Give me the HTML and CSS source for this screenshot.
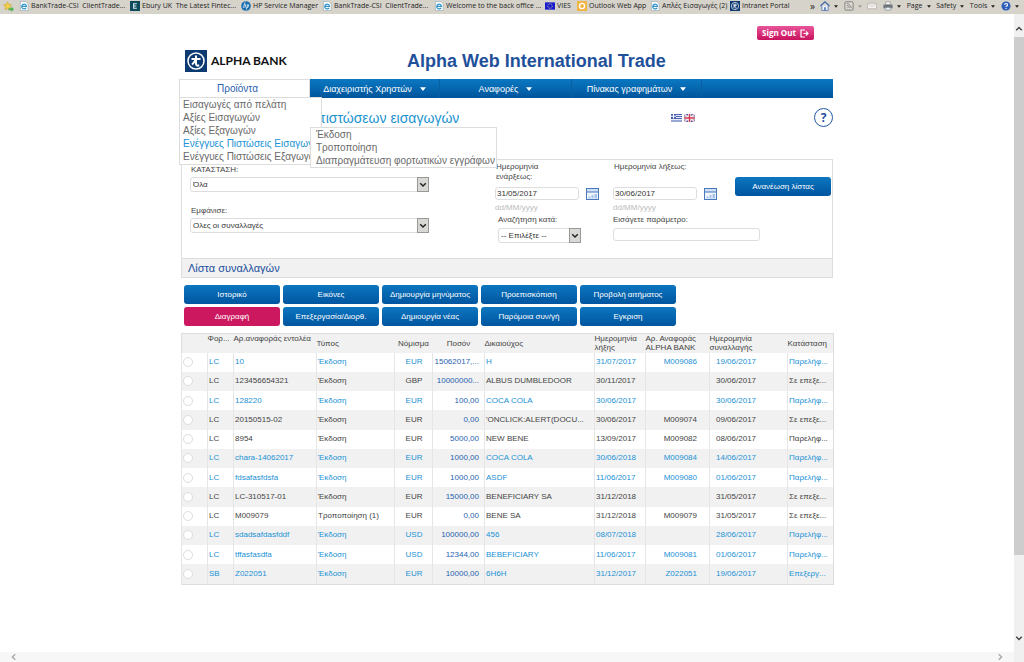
FILE: index.html
```html
<!DOCTYPE html>
<html lang="el">
<head>
<meta charset="utf-8">
<title>Alpha Web International Trade</title>
<link rel="stylesheet" href="styles.css">
</head>
<body>
<svg class="defs" aria-hidden="true">
  <symbol id="ie" viewBox="0 0 10 11"><path d="M1 .5h6l2.500 2.500v7.500H1z" fill="#fff" stroke="#9aa7b0" stroke-width=".7"/><path d="M7.300 7.500a2.600 2.600 0 1 1 .4-1.500H2.600" fill="none" stroke="#2f94c8" stroke-width="1.300"/></symbol>
  <symbol id="chev" viewBox="0 0 10 10"><path d="M1.500 3.500 5 7l3.500-3.500" fill="none" stroke="currentColor" stroke-width="1.800"/></symbol>
  <symbol id="tri" viewBox="0 0 8 5"><path d="M0 0h8L4 5z" fill="currentColor"/></symbol>
  <symbol id="cal" viewBox="0 0 13 12"><rect x=".5" y=".5" width="12" height="11" fill="#eef4fc" stroke="#4a78bd"/><path d="M1 1h11v3H1z" fill="#cfe0f5"/><path d="M0 4h13" stroke="#4a78bd"/><path d="M2.500 8.500h2v2h-2zM5.500 7h2v3.500h-2zM8.500 6h2.500v4.500H8.500z" fill="#a9c4e8"/></symbol>
  <symbol id="alpha" viewBox="0 0 22 22"><path d="M0 0h22v22H0z" fill="#0d3a73"/><circle cx="11" cy="11" r="8" fill="none" stroke="#fff" stroke-width="1.500"/><path d="M11 5.500v8c0 2 1.200 2.600 3.200 1.800M6.500 9h9M11 9c-1.500 3-2.500 4.500-4 5.500" fill="none" stroke="#fff" stroke-width="2"/></symbol>
</svg>

<header class="favbar">
  <svg class="star" viewBox="0 0 12 12"><path d="M5 1l1.400 2.900 3.100.4-2.300 2.200.6 3.100L5 8.100 2.200 9.600l.6-3.100L.5 4.300l3.100-.4z" fill="#f5d04a" stroke="#c99a22" stroke-width=".6"/><path d="M6 8h3V6l3 3-3 3v-2H6z" fill="#4db34a"/></svg>
  <nav class="favs" aria-label="Favorites">
    <a href="#"><svg><use href="#ie"/></svg>BankTrade-CSI&nbsp; ClientTrade...</a>
    <a href="#"><svg viewBox="0 0 11 11"><path d="M0 0h11v11H0z" fill="#0d4a5c"/><path d="M7.500 3H4v5h3.500M4 5.500h3" fill="none" stroke="#d8eef0" stroke-width="1.200"/></svg>Ebury UK&nbsp; The Latest Fintec...</a>
    <a href="#"><svg viewBox="0 0 11 11"><circle cx="5.500" cy="5.500" r="5.300" fill="#1c6fae"/><path d="M4.500 1.500 2.500 7.500M3.800 4.200h1.400L4.200 7.500M7.200 4 5.800 9.500M7 4.200h1.500L7.500 7.200H6.400" fill="none" stroke="#fff" stroke-width=".8"/></svg>HP Service Manager</a>
    <a href="#"><svg><use href="#ie"/></svg>BankTrade-CSI&nbsp; ClientTrade...</a>
    <a href="#"><svg><use href="#ie"/></svg>Welcome to the back office ...</a>
    <a href="#"><svg viewBox="0 0 11 11"><path d="M0 1.500h11v8H0z" fill="#1b1bd0"/><circle cx="5.500" cy="5.500" r="2.500" fill="none" stroke="#dfe36a" stroke-dasharray="1 1"/></svg>VIES</a>
    <a href="#"><svg viewBox="0 0 11 11"><path d="M0 0h11v11H0z" fill="#f2b544"/><circle cx="5.500" cy="5.500" r="2.800" fill="none" stroke="#fff" stroke-width="1.400"/></svg>Outlook Web App</a>
    <a href="#"><svg><use href="#ie"/></svg>Απλές Εισαγωγές (2)</a>
    <a href="#"><svg><use href="#alpha"/></svg>Intranet Portal</a>
  </nav>
  <span class="more">»</span>
  <div class="tools">
    <button aria-label="Home"><svg class="ico" viewBox="0 0 11 11"><path d="M2 5v5.500h7V5" fill="#e9eef8" stroke="#5f7fb5"/><path d="M.5 5.500 5.500 1l5 4.500" fill="none" stroke="#3e68a8" stroke-width="1.300"/><path d="M4.500 7h2v3.500h-2z" fill="#5f7fb5"/></svg><svg class="dd"><use href="#tri"/></svg></button>
    <button aria-label="Feeds"><svg class="ico" viewBox="0 0 11 11"><rect x="1" y="1" width="9" height="9" rx="1" fill="#e4e2dc" stroke="#77756f"/><path d="M3 5a3 3 0 0 1 3 3M3 3a5 5 0 0 1 5 5M3 7.500h1" fill="none" stroke="#77756f"/></svg><svg class="dd faint"><use href="#tri"/></svg></button>
    <button aria-label="Mail"><svg class="ico" viewBox="0 0 11 11"><path d="M.5 2.500h10v6H.5z" fill="#f3f2ee" stroke="#bdbab2"/><path d="M1 3l4.500 3L10 3" fill="none" stroke="#d0cdc5"/></svg></button>
    <button aria-label="Print"><svg class="ico" viewBox="0 0 11 11"><path d="M3 1h5v3H3z" fill="#fff" stroke="#777" stroke-width=".6"/><path d="M.5 4h10v4H.500z" fill="#6d7580"/><path d="M2.500 7h6v3h-6z" fill="#e8eef6" stroke="#777" stroke-width=".6"/></svg><svg class="dd"><use href="#tri"/></svg></button>
    <button>Page<svg class="dd"><use href="#tri"/></svg></button>
    <button>Safety<svg class="dd"><use href="#tri"/></svg></button>
    <button>Tools<svg class="dd"><use href="#tri"/></svg></button>
    <button aria-label="Help"><svg class="ico" viewBox="0 0 11 11"><circle cx="5.500" cy="5.500" r="5" fill="#2f5fb8"/><path d="M4 4.300c0-2 3.200-2 3.200 0 0 1.200-1.600 1.200-1.600 2.400M5.600 7.700v1.200" fill="none" stroke="#fff" stroke-width="1.200"/></svg><svg class="dd"><use href="#tri"/></svg></button>
  </div>
</header>

<div class="viewport">
  <main class="page">
    <div class="account">
      <button class="signout">Sign Out<svg viewBox="0 0 9 9"><path d="M5 1H1v7h4M3.500 4.500H8M6 2.500l2 2-2 2" fill="none" stroke="#fff" stroke-width="1.200"/></svg></button>
    </div>
    <div class="brand">
      <a class="logo" href="#"><svg><use href="#alpha"/></svg>ALPHA BANK</a>
      <div class="title">Alpha Web International Trade</div>
    </div>

    <nav class="menubar">
      <div class="tab open">
        <a href="#">Προϊόντα</a>
        <ul class="menu">
          <li><a href="#">Εισαγωγές από πελάτη</a></li>
          <li><a href="#">Αξίες Εισαγωγών</a></li>
          <li><a href="#">Αξίες Εξαγωγών</a></li>
          <li class="active"><a href="#">Ενέγγυες Πιστώσεις Εισαγωγών</a></li>
          <li><a href="#">Ενέγγυες Πιστώσεις Εξαγωγών</a></li>
        </ul>
        <ul class="menu submenu">
          <li><a href="#">Έκδοση</a></li>
          <li><a href="#">Τροποποίηση</a></li>
          <li><a href="#">Διαπραγμάτευση φορτωτικών εγγράφων</a></li>
        </ul>
      </div>
      <a class="tab" href="#">Διαχειριστής Χρηστών<svg><use href="#tri"/></svg></a>
      <a class="tab" href="#">Αναφορές<svg><use href="#tri"/></svg></a>
      <a class="tab" href="#">Πίνακας γραφημάτων<svg><use href="#tri"/></svg></a>
    </nav>

    <div class="heading">
      <h1>πιστώσεων εισαγωγών</h1>
      <div class="flags">
        <a href="#" aria-label="Ελληνικά"><svg viewBox="0 0 11 8"><path d="M0 0h11v8H0z" fill="#e6ebf7"/><path d="M0 .5h11M0 2.500h11M0 4.500h11M0 7h11" stroke="#4a63b5"/><path d="M0 0h5v4.500H0z" fill="#4a63b5"/><path d="M2.500 0v4.500M0 2.200h5" stroke="#fff"/></svg></a>
        <a href="#" aria-label="English"><svg viewBox="0 0 11 8"><path d="M0 0h11v8H0z" fill="#5d62a8"/><path d="M0 0l11 8M11 0 0 8" stroke="#f0d8e0" stroke-width="1.600"/><path d="M5.500 0v8M0 4h11" stroke="#fff" stroke-width="2.800"/><path d="M5.500 0v8M0 4h11" stroke="#d23a50" stroke-width="1.500"/></svg></a>
      </div>
      <button class="help">?</button>
    </div>

    <form class="filters">
      <div class="lists">
        <label for="status">ΚΑΤΑΣΤΑΣΗ:</label>
        <div class="select"><select id="status"><option>Όλα</option></select><svg><use href="#chev"/></svg></div>
        <label for="show">Εμφάνισε:</label>
        <div class="select"><select id="show"><option>Ολες οι συναλλαγές</option></select><svg><use href="#chev"/></svg></div>
      </div>
      <div class="date">
        <label for="from">Ημερομηνία<br>ενάρξεως:</label>
        <div class="pick"><input id="from" type="text" value="31/05/2017"><button type="button" aria-label="Ημερολόγιο"><svg><use href="#cal"/></svg></button></div>
        <small>dd/MM/yyyy</small>
      </div>
      <div class="date">
        <label for="to">Ημερομηνία λήξεως:</label>
        <div class="pick"><input id="to" type="text" value="30/06/2017"><button type="button" aria-label="Ημερολόγιο"><svg><use href="#cal"/></svg></button></div>
        <small>dd/MM/yyyy</small>
      </div>
      <button class="btn refresh" type="button">Ανανέωση λίστας</button>
      <div class="search">
        <label for="by">Αναζήτηση κατά:</label>
        <div class="select"><select id="by"><option>-- Επιλέξτε --</option></select><svg><use href="#chev"/></svg></div>
      </div>
      <div class="param">
        <label for="param">Εισάγετε παράμετρο:</label>
        <input id="param" type="text">
      </div>
    </form>

    <h2>Λίστα συναλλαγών</h2>
    <div class="actions">
      <button class="btn">Ιστορικό</button>
      <button class="btn">Εικόνες</button>
      <button class="btn">Δημιουργία μηνύματος</button>
      <button class="btn">Προεπισκόπιση</button>
      <button class="btn">Προβολή αιτήματος</button>
      <button class="btn danger">Διαγραφή</button>
      <button class="btn">Επεξεργασία/Διορθ.</button>
      <button class="btn">Δημιουργία νέας</button>
      <button class="btn">Παρόμοια συν/γή</button>
      <button class="btn">Εγκριση</button>
    </div>

    <table class="list">
      <colgroup><col class="c26"><col class="c26"><col class="c83"><col class="c78"><col class="c38"><col class="c52"><col class="c110"><col class="c51"><col class="c64"><col class="c78"><col class="c46"></colgroup>
      <thead><tr><th></th><th class="up">Φορ...</th><th class="up">Αρ.αναφοράς εντολέα</th><th>Τύπος</th><th class="mid">Νόμισμα</th><th class="mid">Ποσόν</th><th>Δικαιούχος</th><th>Ημερομηνία λήξης</th><th>Αρ. Αναφοράς ALPHA BANK</th><th>Ημερομηνία συναλλαγής</th><th>Κατάσταση</th></tr></thead>
      <tbody>
        <tr class="new"><td><input type="radio" name="r" aria-label="10"></td><td>LC</td><td>10</td><td>Έκδοση</td><td>EUR</td><td>15062017,...</td><td>H</td><td>31/07/2017</td><td>M009086</td><td>19/06/2017</td><td>Παρελήφ...</td></tr>
        <tr><td><input type="radio" name="r" aria-label="123456654321"></td><td>LC</td><td>123456654321</td><td>Έκδοση</td><td>GBP</td><td>10000000...</td><td>ALBUS DUMBLEDOOR</td><td>30/11/2017</td><td></td><td>30/06/2017</td><td>Σε επεξε...</td></tr>
        <tr class="new"><td><input type="radio" name="r" aria-label="128220"></td><td>LC</td><td>128220</td><td>Έκδοση</td><td>EUR</td><td>100,00</td><td>COCA COLA</td><td>30/06/2017</td><td></td><td>30/06/2017</td><td>Παρελήφ...</td></tr>
        <tr><td><input type="radio" name="r" aria-label="20150515-02"></td><td>LC</td><td>20150515-02</td><td>Έκδοση</td><td>EUR</td><td>0,00</td><td>'ONCLICK:ALERT(DOCU...</td><td>30/06/2017</td><td>M009074</td><td>09/06/2017</td><td>Σε επεξε...</td></tr>
        <tr><td><input type="radio" name="r" aria-label="8954"></td><td>LC</td><td>8954</td><td>Έκδοση</td><td>EUR</td><td>5000,00</td><td>NEW BENE</td><td>13/09/2017</td><td>M009082</td><td>08/06/2017</td><td>Παρελήφ...</td></tr>
        <tr class="new"><td><input type="radio" name="r" aria-label="chara-14062017"></td><td>LC</td><td>chara-14062017</td><td>Έκδοση</td><td>EUR</td><td>1000,00</td><td>COCA COLA</td><td>30/06/2018</td><td>M009084</td><td>14/06/2017</td><td>Παρελήφ...</td></tr>
        <tr class="new"><td><input type="radio" name="r" aria-label="fdsafasfdsfa"></td><td>LC</td><td>fdsafasfdsfa</td><td>Έκδοση</td><td>EUR</td><td>1000,00</td><td>ASDF</td><td>11/06/2017</td><td>M009080</td><td>01/06/2017</td><td>Παρελήφ...</td></tr>
        <tr><td><input type="radio" name="r" aria-label="LC-310517-01"></td><td>LC</td><td>LC-310517-01</td><td>Έκδοση</td><td>EUR</td><td>15000,00</td><td>BENEFICIARY SA</td><td>31/12/2018</td><td></td><td>31/05/2017</td><td>Σε επεξε...</td></tr>
        <tr><td><input type="radio" name="r" aria-label="M009079"></td><td>LC</td><td>M009079</td><td>Τροποποίηση (1)</td><td>EUR</td><td>0,00</td><td>BENE SA</td><td>31/12/2018</td><td>M009079</td><td>31/05/2017</td><td>Σε επεξε...</td></tr>
        <tr class="new"><td><input type="radio" name="r" aria-label="sdadsafdasfddf"></td><td>LC</td><td>sdadsafdasfddf</td><td>Έκδοση</td><td>USD</td><td>100000,00</td><td>456</td><td>08/07/2018</td><td></td><td>28/06/2017</td><td>Παρελήφ...</td></tr>
        <tr class="new"><td><input type="radio" name="r" aria-label="tffasfasdfa"></td><td>LC</td><td>tffasfasdfa</td><td>Έκδοση</td><td>USD</td><td>12344,00</td><td>BEBEFICIARY</td><td>11/06/2017</td><td>M009081</td><td>01/06/2017</td><td>Παρελήφ...</td></tr>
        <tr class="new"><td><input type="radio" name="r" aria-label="Z022051"></td><td>SB</td><td>Z022051</td><td>Έκδοση</td><td>EUR</td><td>10000,00</td><td>6H6H</td><td>31/12/2017</td><td>Z022051</td><td>19/06/2017</td><td>Επεξεργ...</td></tr>
      </tbody>
    </table>
  </main>
  <div class="vbar"><svg class="flip"><use href="#chev"/></svg><div class="thumb"></div><svg><use href="#chev"/></svg></div>
  <div class="hbar"><svg class="left"><use href="#chev"/></svg><svg class="right"><use href="#chev"/></svg></div>
</div>
</body>
</html>
```

FILE: styles.css
```css
* { box-sizing: border-box; }
body {
  margin: 0;
  height: 100vh;
  display: flex;
  flex-direction: column;
  overflow: hidden;
  background: #fff;
  color: #444;
  font: 8px/10px "Liberation Sans", Arial, sans-serif;
}
.defs { position: absolute; width: 0; height: 0; }
a { color: inherit; text-decoration: none; }
button, input, select { font: inherit; color: inherit; margin: 0; }
button { border: 0; padding: 0; background: none; white-space: nowrap; }
ul { list-style: none; margin: 0; padding: 0; }

/* Favorites bar */
.favbar {
  display: flex;
  align-items: center;
  height: 14px;
  flex: none;
  padding: 0 5px 2px 3px;
  background: #d6d3cb;
  color: #222;
  font: 7px/12px "Open Sans", Tahoma, sans-serif;
}
.star { width: 11px; height: 11px; margin-right: 5px; }
.favs { display: grid; grid-template-columns: 111px 111px 81px 112px 111px 32px 73px 80px 80px; }
.favs a { display: flex; align-items: center; gap: 2px; white-space: nowrap; }
.favs svg { width: 10px; height: 10px; flex: none; }
.more { font-size: 10px; line-height: 12px; }
.tools { display: flex; flex: 1; align-items: center; justify-content: space-between; padding-left: 5px; }
.tools button { display: flex; align-items: center; gap: 4px; }
.ico { width: 10px; height: 10px; }
.dd { width: 4px; height: 3px; }
.faint { opacity: .3; }

/* Scrolling area */
.viewport {
  flex: 1;
  min-height: 0;
  display: grid;
  grid-template: 1fr 10px / 1fr 10px;
}
.vbar {
  grid-area: 1 / 2 / 3 / 3;
  display: flex;
  flex-direction: column;
  align-items: center;
  padding: 11px 0 20px;
  background: #f0f0f0;
  color: #444;
}
.vbar svg, .hbar svg { width: 8px; height: 8px; flex: none; }
.thumb { width: 100%; flex: 0 0 84%; margin: 4px 0 auto; background: #cdcdcd; }
.hbar {
  grid-area: 2 / 1;
  display: flex;
  align-items: center;
  justify-content: space-between;
  padding: 0 10px;
  background: #f7f7f7;
  color: #aaa;
}
.flip { transform: rotate(180deg); }
.left { transform: rotate(90deg); }
.right { transform: rotate(-90deg); }

.page { width: 100%; max-width: 656px; margin: 0 auto; padding: 12px 2px 0 0; }

/* Masthead */
.account { display: flex; justify-content: flex-end; padding-right: 19px; }
.signout {
  display: flex;
  align-items: center;
  justify-content: center;
  gap: 4px;
  width: 57px;
  height: 14px;
  border-radius: 2px;
  background: linear-gradient(#e8559a, #c9125c);
  color: #fff;
  font: bold 8px/14px "Open Sans", sans-serif;
}
.signout svg { width: 9px; height: 9px; }
.brand { display: flex; align-items: center; height: 22px; margin: 10px 0 7px 6px; }
.logo { display: flex; align-items: center; gap: 4px; width: 222px; color: #111; font: bold 12px/22px Lato, sans-serif; }
.logo svg { width: 22px; height: 22px; }
.title { color: #1f519b; font: bold 18px/22px "Liberation Sans", sans-serif; white-space: nowrap; }

/* Menu */
.menubar {
  display: grid;
  grid-template-columns: 131px 130px 132px 130px 1fr;
  height: 19px;
  background: linear-gradient(#0a78c2, #00559c);
}
.tab {
  display: flex;
  align-items: center;
  justify-content: center;
  gap: 8px;
  border-right: 1px solid #0a5fa5;
  color: #fff;
  font-size: 9px;
}
.tab svg { width: 6px; height: 4px; }
.open {
  position: relative;
  padding-right: 14px;
  border: 1px solid #ddd;
  background: #fff;
  color: #2a5fb0;
  font-size: 10px;
}
.menu {
  position: absolute;
  z-index: 2;
  top: 17px;
  left: -1px;
  width: 143px;
  padding: 0 0 1px 3px;
  border: 1px solid #ddd;
  background: #fff;
  color: #6a6a6a;
  font-size: 10px;
  line-height: 13px;
  white-space: nowrap;
}
.submenu { z-index: 3; top: 47px; left: 130px; width: auto; padding: 0 1px 0 5px; }
.menu .active { color: #1b93d6; }

/* Heading */
.heading { display: grid; grid-template-columns: 492px 1fr auto; align-items: center; height: 39px; }
h1 { margin: 0; padding-left: 137px; color: #1b93cf; font: 14px/20px "Liberation Sans", sans-serif; }
.flags { display: flex; gap: 2px; }
.flags svg { display: block; width: 11px; height: 8px; }
.help {
  width: 19px;
  height: 19px;
  border: 1px solid #2459a8;
  border-radius: 50%;
  color: #1f4f9f;
  font: bold 12px/17px "Open Sans", sans-serif;
}

/* Filters */
.filters {
  display: grid;
  grid-template-columns: 305px 118px 122px 96px;
  align-items: start;
  margin: 22px 0 0 2px;
  padding: 2px 0 15px 8px;
  border: 1px solid #ddd;
  border-bottom: 0;
}
.filters label { display: block; }
.filters input, select {
  display: block;
  border: 1px solid #ddd;
  border-radius: 3px;
  background: #fff;
  color: #333;
}
.lists { grid-row: 1 / 3; width: 239px; padding-top: 3px; }
.lists label { padding: 0 1px 2px; height: 12px; }
.lists .select + label { margin-top: 14px; }
.select { position: relative; }
select { appearance: none; width: 100%; height: 15px; padding: 0 14px 0 2px; }
.select svg {
  position: absolute;
  top: 0;
  right: 0;
  width: 12px;
  height: 15px;
  padding: 1px;
  border: 1px solid #999;
  background: #d8d8d4;
  color: #222;
  pointer-events: none;
}
.date label { height: 20px; margin: 0 0 5px 1px; }
.pick { display: flex; align-items: center; gap: 7px; }
.pick input { width: 84px; height: 13px; padding: 0 1px; }
.pick svg { display: block; width: 13px; height: 12px; }
.date small { display: block; margin-top: 3px; color: #bbb; font-size: 8px; }
.search { grid-column: 2; padding-left: 3px; }
.search, .param { padding-top: 2px; }
.search label, .param label { margin-bottom: 3px; }
.search .select { width: 83px; }
.param { grid-column: 3 / 5; }
.param input { width: 147px; height: 13px; }
.btn {
  height: 19px;
  border-radius: 3px;
  background: linear-gradient(#0d76c0, #00559f);
  color: #fff;
}
.refresh { margin-top: 15px; }

h2 {
  margin: 0 0 0 2px;
  padding-left: 6px;
  border: 1px solid #ddd;
  background: #f1f1f1;
  color: #1c4f9c;
  font: 11px/18px "Liberation Sans", sans-serif;
}
.actions { display: grid; grid-template-columns: repeat(5, 96px); gap: 3px; padding: 7px 0 7px 5px; }
.danger { background: #cc185f; }

/* Transactions */
.list {
  width: calc(100% - 2px);
  height: 252px;
  margin-left: 2px;
  border-collapse: collapse;
  table-layout: fixed;
  border: 1px solid #ddd;
}
.c26 { width: 26px; } .c83 { width: 83px; } .c78 { width: 78px; } .c38 { width: 38px; }
.c52 { width: 52px; } .c110 { width: 110px; } .c51 { width: 51px; } .c64 { width: 64px; } .c46 { width: 46px; }
th { height: 19px; padding: 0; background: #f1f1f1; font-weight: normal; line-height: 9px; text-align: left; white-space: nowrap; }
th:nth-child(n+8) { white-space: normal; }
th.up { padding-bottom: 9px; }
th.mid, td:nth-child(5) { text-align: center; }
td { padding: 0 0 0 1px; border-left: 1px solid #e6e6e6; white-space: nowrap; }
tbody tr:nth-child(even) { background: #f1f1f1; }
.new { color: #2191d6; }
td:nth-child(6) { padding-right: 5px; color: #1f5fb0; text-align: right; }
td:nth-child(9) { padding-right: 12px; text-align: right; }
td:nth-child(10) { padding-left: 6px; }
td input {
  display: block;
  appearance: none;
  width: 10px;
  height: 10px;
  border: 1px solid #ddd;
  border-radius: 50%;
  background: #fff;
}
```
